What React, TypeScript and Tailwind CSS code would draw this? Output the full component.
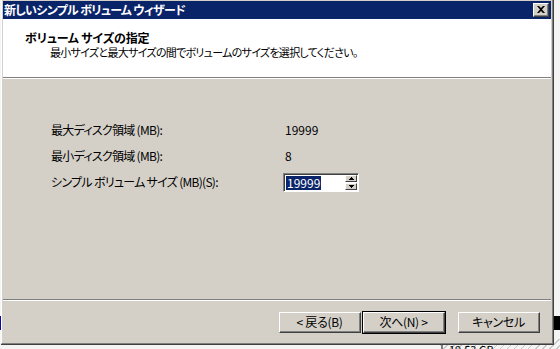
const jp = {
  fontFamily: '"MS UI Gothic", "Noto Sans CJK JP", "Liberation Sans", sans-serif',
  fontFeatureSettings: '"palt"',
};

function Button({ label, primary }: { label: string; primary?: boolean }) {
  return (
    <div className={primary ? "border border-black" : "border border-transparent"}>
      <div className="border-t border-l border-white border-r border-b border-r-[#404040] border-b-[#404040]">
        <div className="flex h-[19px] w-[80px] items-center justify-center border-r border-b border-[#808080] bg-[#d4d0c8] text-[12px] tracking-[-0.3px] text-black">
          {label}
        </div>
      </div>
    </div>
  );
}

function SpinBox() {
  return (
    <div className="flex h-[19px] w-[76px] border-t border-l border-[#808080] border-r border-b border-r-white border-b-white">
      <div className="flex flex-1 items-center border-t border-l border-[#404040] bg-white pl-[1px] pr-[1px]">
        <span className="bg-[#0a246a] px-[1px] text-[12px] leading-[14px] text-white">19999</span>
        <div className="flex-1" />
        <div className="flex flex-col gap-[1px]">
          <div className="flex h-[7px] w-[12px] items-center justify-center border-t border-l border-white border-r border-b border-r-[#404040] border-b-[#404040] bg-[#d4d0c8]">
            <svg width="5" height="3" viewBox="0 0 5 3"><path d="M2 0h1v1h1v1h1v1H0V2h1V1h1z" fill="#000" /></svg>
          </div>
          <div className="flex h-[7px] w-[12px] items-center justify-center border-t border-l border-white border-r border-b border-r-[#404040] border-b-[#404040] bg-[#d4d0c8]">
            <svg width="5" height="3" viewBox="0 0 5 3"><path d="M0 0h5v1H4v1H3v1H2V2H1V1H0z" fill="#000" /></svg>
          </div>
        </div>
      </div>
    </div>
  );
}

export default function App() {
  return (
    <div className="relative h-[349px] w-[560px] overflow-hidden bg-[#f4f4f4]" style={jp}>
      {/* windows behind the dialog */}
      <div className="absolute left-0 top-[316px] h-[14px] w-[3px] bg-[#0a0aa0]" />
      <div className="absolute right-0 top-[316px] h-[14px] w-[8px] bg-black" />
      <div
        className="absolute bottom-0 right-0 h-[10px] w-[120px]"
        style={{
          backgroundImage:
            "repeating-linear-gradient(135deg, transparent 0 4px, #c8c8c8 4px 5px)",
        }}
      />
      <div className="absolute bottom-0 left-[441px] h-[8px] w-[2px] bg-[#808080]" />
      <div className="absolute left-[449px] top-[343px] text-[11px] leading-[12px] text-black">19.53 GB</div>

      {/* dialog */}
      <div className="relative ml-[1px] w-[553px] border-r border-b border-[#404040] bg-[#d4d0c8]">
        <div className="border-l border-white border-r border-b border-r-[#808080] border-b-[#808080] p-[1px]">
          {/* title bar */}
          <div className="flex h-[18px] items-center justify-between bg-[#0a246a] pl-[1px] pr-[2px]">
            <span className="text-[12px] font-bold tracking-[-0.7px] text-white">新しいシンプル ボリューム ウィザード</span>
            <div className="border-t border-l border-white border-r border-b border-r-[#404040] border-b-[#404040]">
              <div className="flex h-[12px] w-[14px] items-center justify-center border-r border-b border-[#808080] bg-[#d4d0c8]">
                <svg width="8" height="7" viewBox="0 0 8 7">
                  <path d="M0 0h2l2 2 2-2h2L5 3.5 8 7H6L4 5 2 7H0l3-3.5z" fill="#000" />
                </svg>
              </div>
            </div>
          </div>

          {/* header */}
          <div className="flex h-[58px] flex-col bg-white pl-[22px] pt-[12px]">
            <span className="text-[12px] font-bold leading-[14px] tracking-[-0.2px] text-black">ボリューム サイズの指定</span>
            <span className="pl-[25px] text-[11px] leading-[14px] tracking-[-0.7px] text-black">
              最小サイズと最大サイズの間でボリュームのサイズを選択してください。
            </span>
          </div>
          <div className="h-[1px] bg-[#808080]" />
          <div className="h-[1px] bg-white" />

          {/* body */}
          <div className="flex h-[220px] flex-col gap-[12px] pl-[48px] pt-[44px] text-[12px] tracking-[-0.7px] text-black">
            <div className="flex h-[14px] items-center">
              <span className="w-[234px]">最大ディスク領域 (MB):</span>
              <span className="tracking-normal">19999</span>
            </div>
            <div className="flex h-[14px] items-center">
              <span className="w-[234px]">最小ディスク領域 (MB):</span>
              <span>8</span>
            </div>
            <div className="flex h-[14px] items-center">
              <span className="w-[232px]">シンプル ボリューム サイズ (MB)(S):</span>
              <div className="tracking-normal">
                <SpinBox />
              </div>
            </div>
          </div>
          <div className="h-[1px] bg-[#808080]" />
          <div className="h-[1px] bg-white" />

          {/* buttons */}
          <div className="flex h-[41px] items-start justify-end pr-[10px] pt-[10px]">
            <Button label="< 戻る(B)" />
            <Button label="次へ(N) >" primary />
            <div className="w-[11px]" />
            <Button label="キャンセル" />
          </div>
        </div>
      </div>
    </div>
  );
}
